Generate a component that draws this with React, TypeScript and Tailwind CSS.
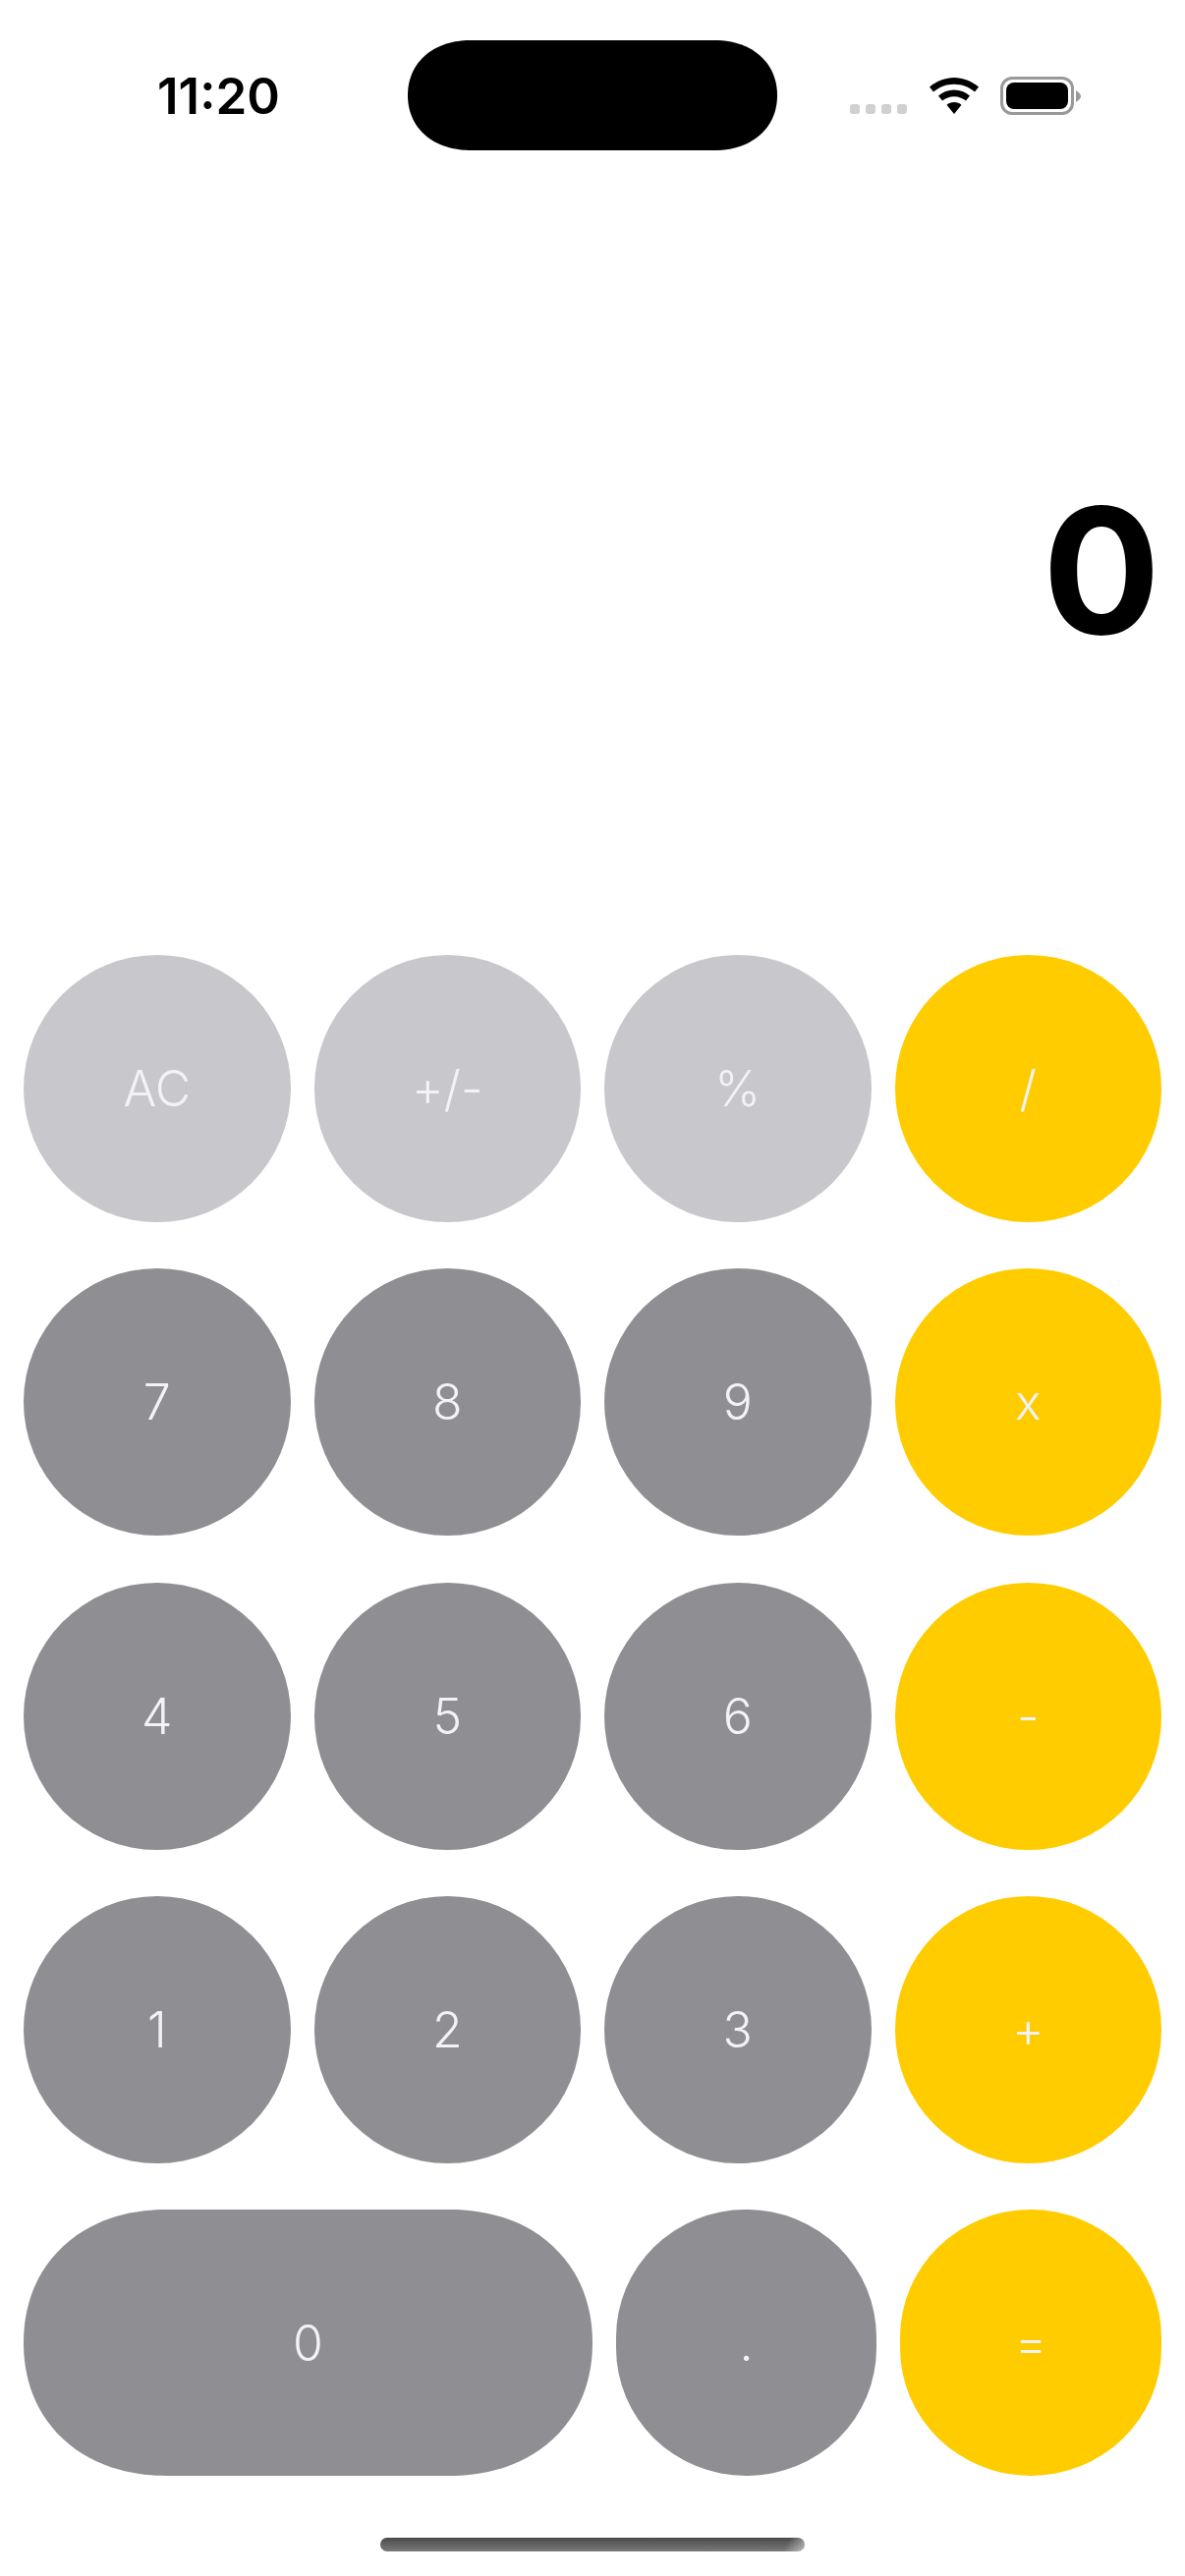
const rows = [
  [
    { label: 'AC', tone: 'light' },
    { label: '+/-', tone: 'light' },
    { label: '%', tone: 'light' },
    { label: '/', tone: 'op' },
  ],
  [
    { label: '7', tone: 'num' },
    { label: '8', tone: 'num' },
    { label: '9', tone: 'num' },
    { label: 'x', tone: 'op' },
  ],
  [
    { label: '4', tone: 'num' },
    { label: '5', tone: 'num' },
    { label: '6', tone: 'num' },
    { label: '-', tone: 'op' },
  ],
  [
    { label: '1', tone: 'num' },
    { label: '2', tone: 'num' },
    { label: '3', tone: 'num' },
    { label: '+', tone: 'op' },
  ],
]

const tones: Record<string, string> = {
  light: 'bg-[#c7c7cc]',
  num: 'bg-[#8e8e93]',
  op: 'bg-[#ffcc00]',
}

function Key({ label, tone, className = '' }: { label: string; tone: string; className?: string }) {
  return (
    <button className={`flex items-center justify-center text-[50px] leading-none font-[340] text-[#f2f2f7] ${tones[tone]} ${className}`}>
      {label}
    </button>
  )
}

function StatusIcons() {
  return (
    <div className="flex items-start">
      {/* signal dots */}
      <div className="mt-[106px] flex gap-[6px]">
        {[0, 1, 2, 3].map((i) => (
          <span key={i} className="h-[10px] w-[10px] rounded-[3px] bg-[#d0d0d0]" />
        ))}
      </div>
      {/* wifi */}
      <svg className="mt-[79px] ml-[23px]" width="50" height="37" viewBox="0 0 50 37">
        <path d="M25 0C34 0 42.500 3.500 50 9.500L46 14.500C40 9.500 33 6.800 25 6.800C17 6.800 10 9.500 4 14.500L0 9.500C7.500 3.500 16 0 25 0Z" fill="#000" />
        <path d="M25 12.500C31 12.500 36.500 14.700 41 18.500L37 23.500C33.500 20.800 29.500 19.200 25 19.200C20.500 19.200 16.500 20.800 13 23.500L9 18.500C13.500 14.700 19 12.500 25 12.500Z" fill="#000" />
        <path d="M25 25C27.800 25 30.500 26 32.500 27.700L25 37L17.500 27.700C19.500 26 22.200 25 25 25Z" fill="#000" />
      </svg>
      {/* battery */}
      <div className="mt-[78px] ml-[22px] flex items-center">
        <div className="h-[39px] w-[75px] rounded-[12px] border-[3px] border-[#999999] p-[3px]">
          <div className="h-full w-full rounded-[8px] bg-black" />
        </div>
        <svg className="ml-[2px]" width="5" height="12" viewBox="0 0 5 12">
          <path d="M0 0C3 2 5 4 5 6C5 8 3 10 0 12Z" fill="#999999" />
        </svg>
      </div>
    </div>
  )
}

export default function App() {
  return (
    <div className="flex h-[2622px] w-[1206px] flex-col bg-white font-[Inter,sans-serif]">
      {/* Status bar */}
      <div className="flex h-[153px] items-start">
        <div className="mt-[70px] ml-[160px] w-[255px] text-[51px] leading-[56px] font-semibold text-black">
          11:20
        </div>
        <div className="mt-[41px] h-[112px] w-[376px] rounded-[64px/56px] bg-black [corner-shape:superellipse(1.1)]" />
        <div className="ml-[74px]">
          <StatusIcons />
        </div>
      </div>

      {/* Display */}
      <div className="flex h-[819px] justify-end pt-[328px] pr-[25px]">
        <span className="text-[178px] leading-[200px] font-bold text-black">0</span>
      </div>

      {/* Keypad */}
      <div className="flex flex-col gap-[47.250px] px-6">
        {rows.map((row, i) => (
          <div key={i} className="grid grid-cols-4 gap-6">
            {row.map((k) => (
              <Key key={k.label} label={k.label} tone={k.tone} className="h-[272px] rounded-full" />
            ))}
          </div>
        ))}
        <div className="flex gap-6">
          <Key label="0" tone="num" className="h-[271px] w-[579px] rounded-[146px/136px] [corner-shape:superellipse(1.1)]" />
          <Key label="." tone="num" className="h-[271px] w-[265px] rounded-[132px/130px]" />
          <Key label="=" tone="op" className="h-[271px] w-[266px] rounded-[133px/130px]" />
        </div>
      </div>

      {/* Home indicator */}
      <div className="mt-[63px] ml-[387px] h-[14px] w-[432px] rounded-full bg-[linear-gradient(115deg,transparent_95%,rgba(255,255,255,0.5)),linear-gradient(to_bottom,#4a4a4a,#7a7a7a)]" />
    </div>
  )
}
